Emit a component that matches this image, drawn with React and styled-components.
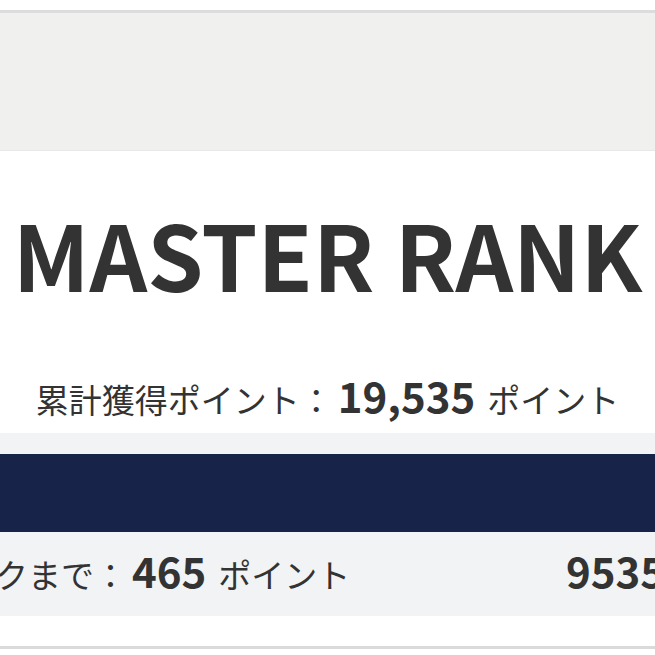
import styled, { createGlobalStyle } from "styled-components"

const GlobalStyle = createGlobalStyle`
    html, body{
        margin: 0;
        padding: 0;
        background: #FFFFFF;
        overflow: hidden;
    }
    body{
        font-family: "Noto Sans CJK JP", "Noto Sans", sans-serif;
        color: #333333;
    }
`

const Page = styled.div`
    width: 655px;
    height: 655px;
    overflow: hidden;
    padding-top: 10px;
    box-sizing: border-box;
`

const Banner = styled.div`
    height: 137px;
    background: #F0F0EE;
    border-top: 3px solid #DCDCDC;
    border-bottom: 1px solid #E7E7E5;
`

const Hero = styled.section`
    display: flex;
    flex-direction: column;
    align-items: center;
    height: 282px;
    overflow: hidden;
`

const RankTitle = styled.h1`
    margin: 57px 0 0;
    font-size: 90px;
    line-height: 1;
    font-weight: 700;
    letter-spacing: 0;
    white-space: nowrap;
    color: #333333;
`

const TotalLine = styled.p`
    margin: 76px 0 0;
    display: flex;
    align-items: baseline;
    white-space: nowrap;
    font-size: 33px;
    line-height: 1;
    color: #333333;
`

const Big = styled.strong`
    font-size: 42px;
    font-weight: 700;
    margin: 0 ${({ after }) => after}px 0 ${({ before }) => before}px;
`

const Progress = styled.section`
    background: #F2F3F5;
    padding-top: 21px;
`

const Bar = styled.div`
    height: 78px;
    background: #172349;
`

const InfoRow = styled.div`
    height: 84px;
    box-sizing: border-box;
    padding-bottom: 8px;
    display: flex;
    align-items: center;
    margin: 0 -10px 0 -137px;
    white-space: nowrap;
`

const NextText = styled.p`
    margin: 0;
    display: flex;
    align-items: baseline;
    font-size: 33px;
    line-height: 1;
`

const Current = styled.strong`
    margin-left: auto;
    font-size: 42px;
    font-weight: 700;
    line-height: 1;
`

const Footer = styled.div`
    margin-top: 30px;
    border-top: 3px solid #DADADA;
`

export default function App() {
    return (
        <Page>
            <GlobalStyle />
            <Banner />
            <Hero>
                <RankTitle>MASTER RANK</RankTitle>
                <TotalLine>
                    累計獲得ポイント：<Big before={5} after={12}>19,535</Big>ポイント
                </TotalLine>
            </Hero>
            <Progress>
                <Bar />
                <InfoRow>
                    <NextText>
                        次のランクまで：<Big before={5} after={12}>465</Big>ポイント
                    </NextText>
                    <Current>9535</Current>
                </InfoRow>
            </Progress>
            <Footer />
        </Page>
    )
}
